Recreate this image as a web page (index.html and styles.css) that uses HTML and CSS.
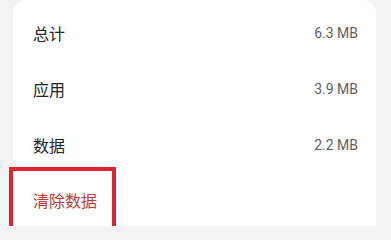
FILE: index.html
```html
<!DOCTYPE html>
<html lang="zh-CN">
<head>
<meta charset="utf-8">
<link rel="stylesheet" href="styles.css">
</head>
<body>
<div class="card">
  <div class="row"><span class="label">总计</span><span class="value">6.3 MB</span></div>
  <div class="row"><span class="label">应用</span><span class="value">3.9 MB</span></div>
  <div class="row"><span class="label">数据</span><span class="value">2.2 MB</span></div>
  <div class="row action">
    <span class="label danger">清除数据</span>
    <div class="highlight"></div>
  </div>
</div>
</body>
</html>
```
FILE: styles.css
```css
html, body {
  margin: 0;
  padding: 0;
  background: #f3f3f3;
  height: 100%;
  overflow: hidden;
}
body {
  font-family: Roboto, "Noto Sans CJK SC", sans-serif;
}
.card {
  margin-left: 13px;
  width: 363px;
  height: 226px;
  box-sizing: border-box;
  background: #ffffff;
  border-radius: 13px 13px 0 0;
  padding-top: 5px;
}
.row {
  height: 56px;
  display: flex;
  align-items: center;
  justify-content: space-between;
  padding: 0 18px 0 20px;
}
.label {
  font-family: "Noto Sans CJK SC", sans-serif;
  font-size: 16px;
  color: #222222;
}
.value {
  font-family: Roboto, sans-serif;
  font-size: 14px;
  color: #5f5f5f;
}
.action {
  position: relative;
  height: 53px;
  padding-bottom: 3px;
}
.danger {
  color: #bd3a3a;
}
.highlight {
  position: absolute;
  left: -4px;
  top: -6px;
  width: 107px;
  height: 59px;
  box-sizing: border-box;
  border: 4px solid #dc2531;
  border-bottom: 0;
}
```
